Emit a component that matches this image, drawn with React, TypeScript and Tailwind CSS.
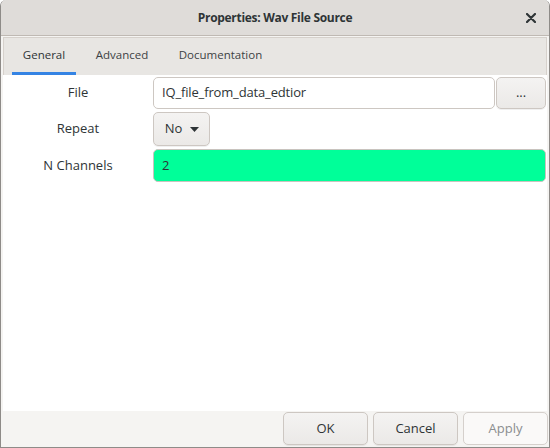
const font = { fontFamily: '"Open Sans", "Noto Sans", sans-serif' };

function GtkButton({
  children,
  className = "",
  disabled = false,
}: {
  children: React.ReactNode;
  className?: string;
  disabled?: boolean;
}) {
  return (
    <button
      className={
        "flex items-center justify-center rounded-[5px] border text-[13px] " +
        (disabled
          ? "border-[#d5d0cc] bg-[#faf9f8] text-[#8b8e8f] "
          : "border-[#cdc7c2] bg-gradient-to-b from-[#f4f3f2] to-[#ebe9e7] text-[#2e3436] shadow-[0_1px_0_rgba(0,0,0,0.06)] ") +
        className
      }
    >
      {children}
    </button>
  );
}

export default function App() {
  return (
    <div
      style={font}
      className="flex h-[448px] w-[550px] flex-col overflow-hidden rounded-t-[6px] border border-t-0 border-[#8e8b88] bg-[#f5f4f2] text-[#2e3436]"
    >
      <header className="relative flex h-[36px] shrink-0 items-center justify-center border-b border-[#bfb9b3] bg-[#dfdcd9]">
        <span className="text-[12px] font-bold tracking-[-0.3px]">Properties: Wav File Source</span>
        <svg
          className="absolute right-[13px] top-[13px]"
          width="10"
          height="10"
          viewBox="0 0 10 10"
        >
          <path d="M1 1L9 9M9 1L1 9" stroke="#2e3436" strokeWidth="2.2" strokeLinecap="round" />
        </svg>
      </header>

      <div className="flex flex-1 flex-col px-[2px] pt-[1px]">
        <div className="flex h-[38px] shrink-0 items-stretch gap-[8px] border border-b-0 border-[#d6d1cc] bg-[#e8e6e3] pl-[8px] text-[11.5px]">
          <div className="flex w-[64px] items-center justify-center border-b-[3px] border-[#3584e4] pb-[1px]">
            General
          </div>
          <div className="flex w-[76px] items-center justify-center pb-[4px] text-[#3d4244]">
            Advanced
          </div>
          <div className="flex w-[105px] items-center justify-center pb-[4px] text-[#3d4244]">
            Documentation
          </div>
        </div>

        <div className="flex flex-1 flex-col gap-[3px] bg-white pr-[1px] pt-[2px]">
          <div className="flex h-[32px] items-stretch">
            <div className="flex w-[150px] items-center justify-center text-[13px]">File</div>
            <div className="flex flex-1 items-center rounded-[5px] border border-[#cdc7c2] bg-white pl-[8px] text-[13px] tracking-[-0.15px]">
              IQ_file_from_data_edtior
            </div>
            <GtkButton className="ml-[1px] w-[50px]">...</GtkButton>
          </div>

          <div className="flex h-[34px] items-stretch">
            <div className="flex w-[150px] items-center justify-center text-[13px]">Repeat</div>
            <GtkButton className="w-[57px] gap-[8px] pl-[1px]">
              No
              <svg width="9" height="5" viewBox="0 0 9 5">
                <path d="M0 0H9L4.5 5Z" fill="#2e3436" />
              </svg>
            </GtkButton>
          </div>

          <div className="flex h-[33px] items-stretch">
            <div className="flex w-[150px] items-center justify-center text-[13px]">N Channels</div>
            <div className="flex flex-1 items-center rounded-[5px] border border-[#c8c3be] bg-[#00ff99] pl-[8px] text-[13px]">
              2
            </div>
          </div>
        </div>
      </div>

      <footer className="flex h-[36px] shrink-0 items-start justify-end gap-[5px] pr-[1px] pt-[1px]">
        <GtkButton className="h-[33px] w-[85px]">OK</GtkButton>
        <GtkButton className="h-[33px] w-[85px]">Cancel</GtkButton>
        <GtkButton disabled className="h-[33px] w-[85px]">
          Apply
        </GtkButton>
      </footer>
    </div>
  );
}
